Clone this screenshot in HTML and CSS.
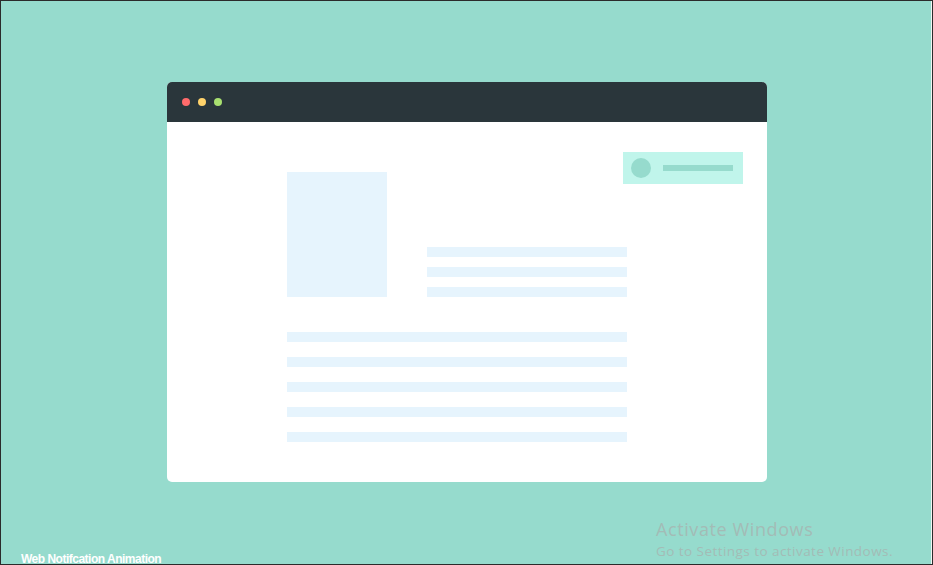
FILE: index.html
```html
<!DOCTYPE html>
<html lang="en">
<head>
<meta charset="utf-8">
<title>Web Notification Animation</title>
<link rel="stylesheet" href="styles.css">
</head>
<body>
<div class="frame">
  <div class="window">
    <div class="titlebar">
      <span class="dot dot-red"></span>
      <span class="dot dot-yellow"></span>
      <span class="dot dot-green"></span>
    </div>
    <div class="content">
      <div class="notification">
        <span class="avatar"></span>
        <span class="note-line"></span>
      </div>
      <div class="top-row">
        <div class="image"></div>
        <div class="short-lines">
          <div class="line short"></div>
          <div class="line short"></div>
          <div class="line short"></div>
        </div>
      </div>
      <div class="long-lines">
        <div class="line long"></div>
        <div class="line long"></div>
        <div class="line long"></div>
        <div class="line long"></div>
        <div class="line long"></div>
      </div>
    </div>
  </div>
  <div class="caption">Web Notifcation Animation</div>
  <div class="watermark">
    <div class="wm-title">Activate Windows</div>
    <div class="wm-sub">Go to Settings to activate Windows.</div>
  </div>
</div>
</body>
</html>
```

FILE: styles.css
```css
html, body {
  margin: 0;
  padding: 0;
}
body {
  background: #2b2b2b;
  font-family: "Liberation Sans", Arial, sans-serif;
}
.frame {
  position: relative;
  box-sizing: border-box;
  width: 933px;
  height: 565px;
  border: 1px solid #2b2b2b;
  background: #96dbcd;
  box-shadow: inset -1px 0 0 #f3f3f3;
  padding: 81px 0 0 166px;
  overflow: hidden;
}
.window {
  width: 600px;
  border-radius: 5px;
  overflow: hidden;
  background: #ffffff;
}
.titlebar {
  height: 40px;
  background: #2a363b;
  display: flex;
  align-items: center;
  gap: 8px;
  padding-left: 15px;
}
.dot {
  width: 8px;
  height: 8px;
  border-radius: 50%;
}
.dot-red { background: #ff6b6b; }
.dot-yellow { background: #ffd36b; }
.dot-green { background: #a8e070; }
.content {
  position: relative;
  height: 360px;
  box-sizing: border-box;
  padding: 50px 0 0 120px;
}
.notification {
  position: absolute;
  left: 456px;
  top: 30px;
  width: 120px;
  height: 32px;
  background: #c0f5eb;
  display: flex;
  align-items: center;
  box-sizing: border-box;
  padding-left: 8px;
}
.avatar {
  width: 20px;
  height: 20px;
  border-radius: 50%;
  background: #96dbcd;
}
.note-line {
  margin-left: 12px;
  width: 70px;
  height: 6px;
  background: #96dbcd;
}
.top-row {
  display: flex;
  align-items: flex-end;
}
.image {
  width: 100px;
  height: 125px;
  background: #e6f4fd;
}
.short-lines {
  margin-left: 40px;
  display: flex;
  flex-direction: column;
  gap: 10px;
}
.line {
  height: 10px;
  background: #e6f4fd;
}
.line.short { width: 200px; }
.long-lines {
  margin-top: 35px;
  display: flex;
  flex-direction: column;
  gap: 15px;
}
.line.long { width: 340px; }
.caption {
  position: absolute;
  left: 20px;
  top: 551px;
  color: #ffffff;
  font-size: 12px;
  font-weight: bold;
  letter-spacing: -0.5px;
  line-height: 14px;
  white-space: nowrap;
}
.watermark {
  position: absolute;
  left: 655px;
  top: 515px;
  color: #a3bcb6;
  font-family: "Open Sans", "Noto Sans", sans-serif;
  white-space: nowrap;
}
.wm-title {
  font-size: 18px;
  line-height: 26px;
  letter-spacing: 0.6px;
}
.wm-sub {
  font-size: 13.5px;
  line-height: 18px;
  letter-spacing: 0.45px;
}
```
